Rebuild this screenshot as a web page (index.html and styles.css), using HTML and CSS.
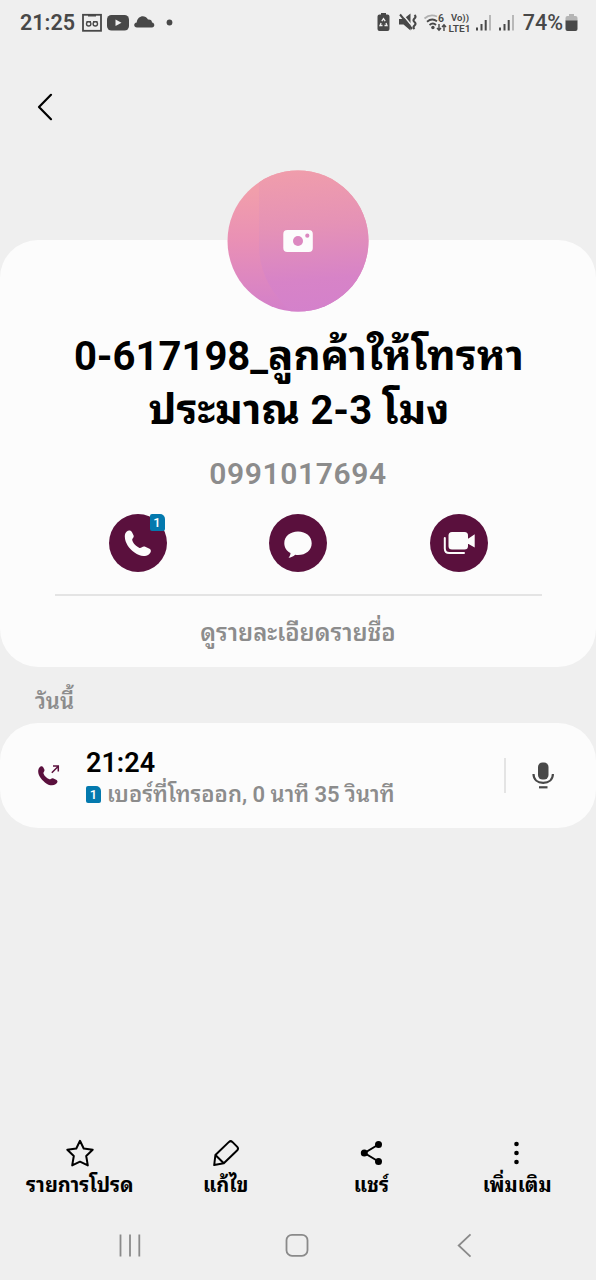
FILE: index.html
```html
<!DOCTYPE html>
<html lang="th">
<head>
  <meta charset="UTF-8" />
  <meta name="viewport" content="width=device-width, initial-scale=1.0" />
  <title>รายละเอียดการโทร</title>
  <link rel="stylesheet" href="styles.css">
</head>
<body>

<div class="statusbar">
  <span class="clock">21:25</span>
  <svg class="notif" width="96" height="22" viewBox="0 0 96 22">
    <rect x="1" y="2.800" width="18" height="16" fill="none" stroke="#484848" stroke-width="1.800"/>
    <path d="M6 2h8v2.500H6z" fill="#484848"/>
    <g fill="none" stroke="#484848" stroke-width="1.400"><circle cx="6.700" cy="11.800" r="2.200"/><circle cx="13.300" cy="11.800" r="2.200"/><path d="M4.500 9.600h4.500M11 9.600h4.500"/></g>
    <rect x="25" y="3" width="22" height="15.500" rx="4.500" fill="#484848"/>
    <path d="M33.500 7.500v6.500l6-3.200z" fill="#efefef"/>
    <path d="M55 15.500c-3.500 0-3.800-4.600-.300-5C55.500 3.500 63 2.200 66 7.500c2.800-.200 3.900 1 4 3 3.200.400 3 5 0 5z" fill="#484848"/>
    <circle cx="87.500" cy="10.500" r="2.900" fill="#484848"/>
  </svg>
  <div class="status-right">
    <svg width="142" height="24" viewBox="0 0 142 24">
      <path d="M4 2h5v2h-5zM2.500 3.500h8a2 2 0 0 1 2 2V18a2 2 0 0 1-2 2h-8a2 2 0 0 1-2-2V5.500a2 2 0 0 1 2-2z" fill="#484848"/>
      <path d="M4.800 10.200l1.700-2.500 1.700 2.500M9 12l1 2.500H7.500M5.500 14.500H3L4.100 12" fill="none" stroke="#efefef" stroke-width="1.300"/>
      <path d="M22 8h4.500l7-5.500v17l-7-6H22z" fill="#484848"/>
      <path d="M24.800 2.500l9 11" stroke="#efefef" stroke-width="1.500"/>
      <path d="M23 3.500L35 18" stroke="#484848" stroke-width="2"/>
      <path d="M37.500 4q2 1.700 0 3.500t0 3.500 0 3.500 0 3.500" fill="none" stroke="#484848" stroke-width="2.200"/>
      <path d="M47.500 7.500q5.500-5 12.500-2" fill="none" stroke="#b0b0b0" stroke-width="1.800"/>
      <path d="M50 10.700q5-4.200 10-.500M52.500 14q3.500-3 6.500 0" fill="none" stroke="#484848" stroke-width="1.800"/>
      <circle cx="55.900" cy="16.500" r="1.700" fill="#484848"/>
      <text class="st" x="61" y="11" font-size="10.500">6</text>
      <path d="M62 13v6M60 17l2 2.300 2-2.300M67 20v-6M65 16l2-2.300 2 2.300" fill="none" stroke="#484848" stroke-width="1.400"/>
      <text class="st" x="74" y="10.200" font-size="9" textLength="18" lengthAdjust="spacingAndGlyphs">Vo))</text>
      <text class="st" x="71.500" y="20.700" font-size="9" textLength="22" lengthAdjust="spacingAndGlyphs">LTE1</text>
      <g fill="#484848"><path d="M99 16.500h2v3h-2zM103.500 13h2v6.500h-2zM107.700 9h2v10.500h-2z"/><path d="M122 16.500h2v3h-2zM126.500 13h2v6.500h-2zM130.700 9h2v10.500h-2z"/></g>
      <path d="M112 4h2v15.500h-2zM135 4h2v15.500h-2z" fill="#b8b8b8"/>
    </svg>
    <span class="percent">74%</span>
    <svg width="14" height="20" viewBox="0 0 14 20">
      <path d="M4 1h5v2h1.500Q12.500 3 12.500 5v3H.500V5q0-2 2-2H4z" fill="#b5b5b5"/>
      <path d="M.500 7.500h12V16q0 2-2 2h-8q-2 0-2-2z" fill="#484848"/>
    </svg>
  </div>
</div>

<div class="header">
  <svg width="20" height="30" viewBox="0 0 20 30"><path d="M16 2.800L4 15l12 12.200" fill="none" stroke="#000" stroke-width="2.200" stroke-linecap="round" stroke-linejoin="round"/></svg>
</div>

<div class="card profile">
  <svg class="avatar" width="142" height="142" viewBox="0 0 142 142">
    <defs>
      <linearGradient id="back" x1="0" y1="0" x2="0" y2="1"><stop offset=".15" stop-color="#f19eab"/><stop offset=".5" stop-color="#e990b5"/><stop offset="1" stop-color="#d37fca"/></linearGradient>
      <linearGradient id="front" gradientUnits="userSpaceOnUse" x1="60" y1="0" x2="71" y2="142"><stop offset="0" stop-color="#f09dab"/><stop offset=".4" stop-color="#e592b6"/><stop offset=".78" stop-color="#d783c7"/><stop offset="1" stop-color="#d481cb"/></linearGradient>
      <clipPath id="round"><circle cx="71" cy="71" r="70.500"/></clipPath>
    </defs>
    <g clip-path="url(#round)">
      <rect width="142" height="142" fill="url(#back)"/>
      <path d="M32 0H142V142H64Q32 112 32 76z" fill="url(#front)"/>
    </g>
    <rect x="56.300" y="60" width="29.500" height="22" rx="4" fill="#fcfcfc"/>
    <circle cx="71" cy="71" r="5" fill="#dc88c0"/>
    <circle cx="80.300" cy="65.700" r="2.100" fill="#dc88c0"/>
  </svg>
  <h1><span class="digits">0-617198_</span>ลูกค้าให้โทรหา<br>ประมาณ <span class="digits">2-3</span> โมง</h1>
  <div class="number">0991017694</div>
  <div class="actions">
    <button type="button" class="action">
      <svg width="58" height="58" viewBox="0 0 58 58"><path d="M17.500 17.800c2-2 4.500-1.500 5.500.500l1.500 3c1 2-1.300 3-1.300 4.800.800 3.500 4.300 6.500 7.300 7.800 1.800.500 3.200-2.100 5.200-1.300l4.800 2.200c2.300 1.500 1.500 4-.700 5.600-4 2.900-9.300 2-14.300-1.800C20 34.500 16 29 15.800 22.500c0-2 .500-3.400 1.700-4.700z" fill="#fcfcfc"/></svg>
      <span class="sim badge">1</span>
    </button>
    <button type="button" class="action">
      <svg width="58" height="58" viewBox="0 0 58 58"><path d="M29 17.500c8 0 13.700 5 13.700 11.700S37 41 29 41c-1 0-1.900 0-2.800-.200-2 1.700-4.200 2.800-6.700 3 1.300-1.500 2-3.200 2-4.800-3.900-2.100-6.200-5.600-6.200-9.800C15.300 22.500 21 17.500 29 17.500z" fill="#fcfcfc"/></svg>
    </button>
    <button type="button" class="action">
      <svg width="58" height="58" viewBox="0 0 58 58"><rect x="18.500" y="18" width="19.500" height="17.500" rx="3.500" fill="#fcfcfc"/><path d="M37 24.500h1.500l6.200-4.300v13.300L38.500 30H37z" fill="#fcfcfc"/><path d="M14.800 24v10.500q0 4.500 4.500 4.500H34" fill="none" stroke="#fcfcfc" stroke-width="2" stroke-linecap="round"/></svg>
    </button>
  </div>
  <div class="details">ดูรายละเอียดรายชื่อ</div>
</div>

<div class="day">วันนี้</div>

<div class="card call">
  <svg class="outgoing" width="24" height="24" viewBox="0 0 24 24">
    <path d="M2.600 3.300c1.300-1.600 3.300-1 4 .600l.800 1.700c.600 1.500-1 2.300-1 3.700.800 2.600 3.200 5 6 6 1.300.300 2.200-1.500 3.600-1l3.600 1.800c1.600 1.200.900 3-.700 4-3.300 2.200-7.300 1.300-11-1.700C3.800 15 .800 10.800 1.200 6.500c.100-1.300.600-2.300 1.400-3.200z" fill="#5a103d"/>
    <path d="M14.800 8.700l6.500-6.500M16 2h5.300v5.500" fill="none" stroke="#5a103d" stroke-width="1.500"/>
  </svg>
  <div class="info">
    <div class="time">21:24</div>
    <div class="desc"><span class="sim">1</span><span class="desc-text">เบอร์ที่โทรออก, 0 นาที 35 วินาที</span></div>
  </div>
  <div class="record">
    <svg width="24" height="30" viewBox="0 0 24 30"><rect x="7" y="1.500" width="10.500" height="17" rx="4.500" fill="#484848"/><path d="M2.500 13c0 5.500 4 8.800 9.700 8.800s9.700-3.300 9.700-8.800" fill="none" stroke="#484848" stroke-width="2.200"/><path d="M8 26.300h8.500" stroke="#484848" stroke-width="2.200"/></svg>
  </div>
</div>

<div class="toolbar">
  <div class="tool">
    <svg width="30" height="30" viewBox="0 0 30 30"><path d="M15 2.800l3.700 7.700 9 1.200-6.500 6.300 1.600 9.400L15 23.700l-7.800 3.700L8.800 18 2.300 11.700l9-1.200z" fill="none" stroke="#000" stroke-width="2" stroke-linejoin="round"/></svg>
    <span>รายการโปรด</span>
  </div>
  <div class="tool">
    <svg width="30" height="30" viewBox="0 0 30 30"><path d="M3.200 27l1.200-10L18 3.900q1.700-1.500 3.300 0l5 5q1.500 1.700 0 3.300L12.800 25.300zM4.400 17l8.400 8.300" fill="none" stroke="#000" stroke-width="2" stroke-linejoin="round"/></svg>
    <span>แก้ไข</span>
  </div>
  <div class="tool">
    <svg width="30" height="30" viewBox="0 0 30 30"><path d="M22.500 6.500L8.500 15l14 8.500" fill="none" stroke="#000" stroke-width="2"/><circle cx="22.500" cy="6.500" r="3.500"/><circle cx="8.300" cy="15" r="3.500"/><circle cx="22.500" cy="23.500" r="3.500"/></svg>
    <span>แชร์</span>
  </div>
  <div class="tool">
    <svg width="30" height="30" viewBox="0 0 30 30"><circle cx="14.500" cy="6" r="2.300"/><circle cx="14.500" cy="15" r="2.300"/><circle cx="14.500" cy="24" r="2.300"/></svg>
    <span>เพิ่มเติม</span>
  </div>
</div>

<div class="navbar">
  <svg width="26" height="26" viewBox="0 0 26 26"><path d="M3.500 2.500v22M13 2.500v22M22.300 2.500v22" stroke="#8a8a8a" stroke-width="1.800"/></svg>
  <svg width="26" height="26" viewBox="0 0 26 26"><rect x="1.500" y="2.800" width="21" height="21" rx="5.500" fill="none" stroke="#8a8a8a" stroke-width="1.800"/></svg>
  <svg width="26" height="26" viewBox="0 0 26 26"><path d="M17.500 2.300L5.700 13.500l11.800 11.200" fill="none" stroke="#8a8a8a" stroke-width="1.800"/></svg>
</div>

</body>
</html>
```
FILE: styles.css
```css
html, body {
  margin: 0;
  padding: 0;
  height: 100%;
}
body {
  display: flex;
  flex-direction: column;
  background: #efefef;
  font-family: Roboto, "Noto Sans Thai Looped", "Noto Looped Thai", Loma, Waree, Garuda, "Droid Sans Thai", "Noto Sans", sans-serif;
  color: #000;
  overflow: hidden;
}
svg {
  display: block;
  flex: none;
}
.statusbar {
  display: flex;
  align-items: center;
  height: 45px;
  padding: 0 17px 0 20px;
  box-sizing: border-box;
  color: #484848;
}
.clock {
  width: 62px;
  font-size: 21.5px;
  font-weight: 600;
}
.status-right {
  display: flex;
  align-items: center;
  margin-left: auto;
}
.st {
  fill: #484848;
  font-weight: 600;
}
.percent {
  margin-left: 4px;
  margin-right: 2px;
  font-size: 21.5px;
  font-weight: 500;
}
.header {
  height: 195px;
  padding: 47px 35px 0;
  box-sizing: border-box;
}
.card {
  background: #fcfcfc;
  border-radius: 38px;
}
.profile {
  display: flex;
  flex-direction: column;
  align-items: center;
  height: 427px;
}
.avatar {
  margin-top: -70px;
}
h1 {
  margin: 17px 0 0 2px;
  font-size: 42px;
  line-height: 54px;
  font-weight: 700;
  text-align: center;
  white-space: nowrap;
}
.digits {
  font-size: 40px;
  line-height: 1;
}
.number {
  margin-top: 19px;
  font-size: 30px;
  line-height: 36px;
  font-weight: 600;
  letter-spacing: 0.6px;
  color: #8c8c8c;
}
.actions {
  display: flex;
  justify-content: space-between;
  width: 487px;
  padding: 22px 54px 22px;
  box-sizing: border-box;
  border-bottom: 2px solid #e4e4e4;
}
.action {
  position: relative;
  width: 58px;
  height: 58px;
  padding: 0;
  border: none;
  border-radius: 50%;
  background: #5a103d;
}
.sim {
  width: 15px;
  height: 17px;
  border-radius: 2px 5px 2px 2px;
  background: #0379ae;
  color: #fff;
  font-family: Roboto, sans-serif;
  font-size: 13px;
  line-height: 17px;
  font-weight: 500;
  text-align: center;
}
.badge {
  position: absolute;
  top: 0;
  right: 2px;
}
.details {
  margin-top: 21px;
  font-size: 23.8px;
  line-height: 32px;
  font-weight: 600;
  color: #8c8c8c;
}
.day {
  height: 56px;
  padding-left: 35px;
  box-sizing: border-box;
  font-size: 22px;
  line-height: 70px;
  font-weight: 600;
  color: #8c8c8c;
}
.call {
  display: flex;
  align-items: center;
  height: 105px;
  padding-left: 37px;
}
.info {
  margin: 6px 0 0 25px;
}
.time {
  font-size: 27px;
  line-height: 32px;
  font-weight: 600;
}
.desc {
  display: flex;
  align-items: center;
  gap: 6px;
  height: 32px;
  color: #8c8c8c;
  font-size: 22px;
  font-weight: 600;
  white-space: nowrap;
}
.desc-text {
  line-height: 32px;
  margin-top: 1px;
}
.record {
  margin-left: auto;
  padding: 3px 41px 2px 25px;
  border-left: 2px solid #e4e4e4;
}
.toolbar {
  display: grid;
  grid-template-columns: repeat(4, 1fr);
  margin-top: auto;
  padding: 0 6px 0 7px;
}
.tool {
  display: flex;
  flex-direction: column;
  align-items: center;
  font-size: 20px;
  line-height: 35px;
  font-weight: 700;
  white-space: nowrap;
}
.navbar {
  display: flex;
  justify-content: space-between;
  height: 48px;
  margin-top: 29px;
  padding: 0 117px;
}
```
